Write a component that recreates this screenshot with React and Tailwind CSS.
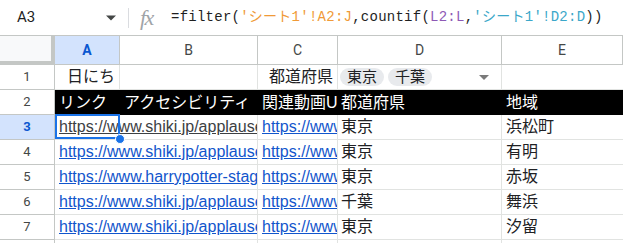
// Spreadsheet snippet: formula bar, column headers and a filtered result range.
const rows = [
  { n: 3, a: 'https://www.shiki.jp/applause/', c: 'https://www.youtube.com/', d: '東京', e: '浜松町', active: true },
  { n: 4, a: 'https://www.shiki.jp/applause/', c: 'https://www.youtube.com/', d: '東京', e: '有明' },
  { n: 5, a: 'https://www.harrypotter-stage.jp/', c: 'https://www.youtube.com/', d: '東京', e: '赤坂' },
  { n: 6, a: 'https://www.shiki.jp/applause/', c: 'https://www.youtube.com/', d: '千葉', e: '舞浜' },
  { n: 7, a: 'https://www.shiki.jp/applause/', c: 'https://www.youtube.com/', d: '東京', e: '汐留' },
]

const cellFont = { fontFamily: '"Liberation Sans", Arial, "Noto Sans CJK JP", sans-serif' }
const grid = 'grid grid-cols-[55px_65px_138px_80px_164px_1fr]'

function RowHead({ n, active }) {
  return (
    <div
      className={`flex items-center justify-center border-r border-b border-[#c4c7c5] text-[13px] ${
        active ? 'bg-[#d3e3fd] font-bold text-[#0b57d0]' : 'bg-white text-[#444746]'
      }`}
      style={{ fontFamily: 'Roboto, Arial, sans-serif' }}
    >
      {n}
    </div>
  )
}

export default function App() {
  return (
    <div className="w-[623px] h-[243px] overflow-hidden bg-white text-[#202124]" style={cellFont}>
      {/* formula bar */}
      <div className="flex items-center h-[36px] border-b border-[#c4c7c5]">
        <div className="flex items-center w-[128px] pl-[17px] pr-[12px] justify-between">
          <span className="text-[15px] text-[#1f1f1f]" style={{ fontFamily: 'Roboto, Arial, sans-serif' }}>A3</span>
          <svg width="10" height="6" viewBox="0 0 10 5" aria-hidden="true">
            <polygon points="0,0 10,0 5,5" fill="#444746" />
          </svg>
        </div>
        <div className="w-px h-[20px] bg-[#dadce0]" />
        <span
          className="ml-[11px] w-[31px] text-[22px] leading-none italic text-[#a0a4a8] tracking-[-1.5px]"
          style={{ fontFamily: '"Liberation Serif", "DejaVu Serif", serif' }}
        >
          fx
        </span>
        <span
          className="text-[14px] tracking-[0.25px] whitespace-nowrap text-[#1f1f1f]"
          style={{ fontFamily: '"Liberation Mono", "Noto Sans CJK JP", monospace' }}
        >
          =filter(
          <span className="text-[#f09a37]">'シート1'!A2:J</span>
          ,countif(
          <span className="text-[#8e59b5]">L2:L</span>,
          <span className="text-[#3ba7c9]">'シート1'!D2:D</span>
          ))
        </span>
      </div>

      {/* column headers */}
      <div className={`${grid} h-[29px] text-[14px] text-[#444746]`} style={{ fontFamily: 'Roboto, Arial, sans-serif' }}>
        <div className="bg-[#f8f9fa] border-r-4 border-b-4 border-[#c4c7c5]" />
        <div className="flex items-center justify-center bg-[#d3e3fd] font-bold text-[#0b57d0] border-r border-b border-[#c4c7c5]">A</div>
        {['B', 'C', 'D', 'E'].map(l => (
          <div key={l} className="flex items-center justify-center bg-white border-r border-b border-[#c4c7c5]">{l}</div>
        ))}
      </div>

      {/* row 1 */}
      <div className={`${grid} h-[25px] text-[16px]`}>
        <RowHead n={1} />
        <div className="flex items-center justify-end pr-[4px] border-r border-b border-[#e1e3e1]">日にち</div>
        <div className="border-r border-b border-[#e1e3e1]" />
        <div className="flex items-center justify-end pr-[4px] border-r border-b border-[#e1e3e1] whitespace-nowrap">都道府県</div>
        <div className="flex items-center gap-[4px] pl-[2px] pr-[12px] border-r border-b border-[#e1e3e1]">
          <span className="px-[7px] h-[18px] flex items-center rounded-full bg-[#e8eaed] text-[15px]">東京</span>
          <span className="px-[7px] h-[18px] flex items-center rounded-full bg-[#e8eaed] text-[15px]">千葉</span>
          <svg className="ml-auto" width="10" height="5" viewBox="0 0 10 5" aria-hidden="true">
            <polygon points="0,0 10,0 5,5" fill="#7a7a7a" />
          </svg>
        </div>
        <div className="border-b border-[#e1e3e1]" />
      </div>

      {/* row 2 */}
      <div className={`${grid} h-[25px] text-[16px]`}>
        <RowHead n={2} />
        <div className="flex items-center pl-[4px] bg-black text-white whitespace-nowrap overflow-hidden">
          <span className="block min-w-0 overflow-hidden">リンク</span>
        </div>
        <div className="flex items-center pl-[4px] bg-black text-white whitespace-nowrap overflow-hidden">
          <span className="block min-w-0 overflow-hidden">アクセシビリティ</span>
        </div>
        <div className="flex items-center pl-[4px] bg-black text-white whitespace-nowrap overflow-hidden">
          <span className="block min-w-0 overflow-hidden">関連動画URL</span>
        </div>
        <div className="flex items-center pl-[3px] bg-black text-white whitespace-nowrap">都道府県</div>
        <div className="flex items-center pl-[4px] bg-black text-white whitespace-nowrap">地域</div>
      </div>

      {/* data rows */}
      {rows.map(r => (
        <div key={r.n} className={`${grid} h-[25px] text-[16px]`}>
          <RowHead n={r.n} active={r.active} />
          <div className="relative col-span-2 flex items-center pl-[4px] border-r border-b border-[#e1e3e1] whitespace-nowrap">
            <span
              className={`block min-w-0 overflow-hidden underline ${r.active ? 'text-[#3c4043]' : 'text-[#1155cc]'}`}
            >
              {r.a}
            </span>
            {r.active && (
              <>
                <div className="absolute left-0 top-[-1px] w-[65px] h-[25px] border-2 border-[#1a73e8]" />
                <div className="absolute left-[60px] top-[19px] w-[10px] h-[10px] rounded-full bg-[#1a73e8] border border-white z-10" />
              </>
            )}
          </div>
          <div className="flex items-center pl-[4px] border-r border-b border-[#e1e3e1] whitespace-nowrap overflow-hidden">
            <span className="block min-w-0 overflow-hidden underline text-[#1155cc]">{r.c}</span>
          </div>
          <div className="flex items-center pl-[3px] border-r border-b border-[#e1e3e1]">{r.d}</div>
          <div className="flex items-center pl-[4px] border-b border-[#e1e3e1]">{r.e}</div>
        </div>
      ))}

      <div className={`${grid} h-[4px]`}>
        <div className="border-r border-[#c4c7c5]" />
        <div className="col-span-2 border-r border-[#e1e3e1]" />
        <div className="border-r border-[#e1e3e1]" />
        <div className="border-r border-[#e1e3e1]" />
        <div />
      </div>
    </div>
  )
}
